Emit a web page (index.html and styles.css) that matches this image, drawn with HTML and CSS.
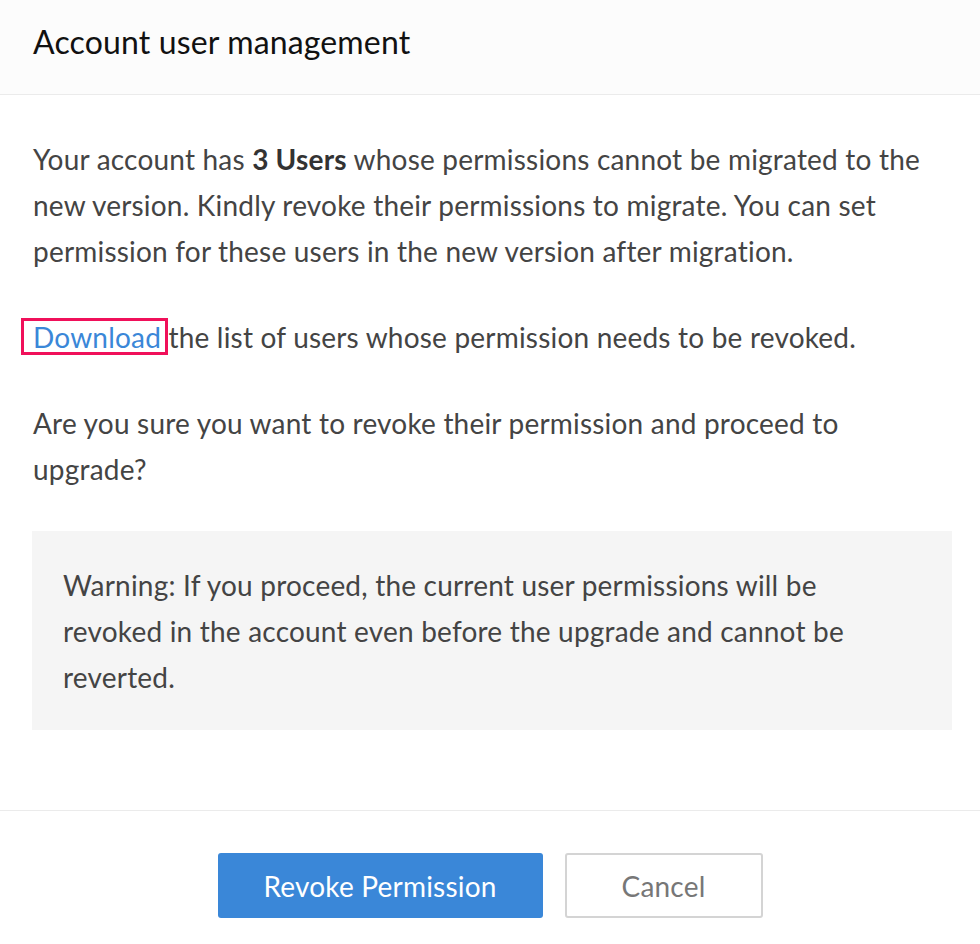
FILE: index.html
```html
<!DOCTYPE html>
<html lang="en">
<head>
    <meta charset="UTF-8">
    <meta name="viewport" content="width=device-width, initial-scale=1.0">
    <title>Account user management</title>
    <link rel="stylesheet" href="styles.css">
</head>
<body>
    <div class="dialog">
        <div class="dialog-header">
            <h2>Account user management</h2>
        </div>

        <div class="dialog-body">
            <p>Your account has <b>3 Users</b> whose permissions cannot be migrated to the new version. Kindly revoke their permissions to migrate. You can set permission for these users in the new version after migration.</p>
            <p><a href="#" class="download-link">Download</a> the list of users whose permission needs to be revoked.</p>
            <p>Are you sure you want to revoke their permission and proceed to upgrade?</p>

            <div class="warning-box">
                Warning: If you proceed, the current user permissions will be revoked in the account even before the upgrade and cannot be reverted.
            </div>
        </div>

        <div class="dialog-footer">
            <button class="btn btn-primary">Revoke Permission</button>
            <button class="btn btn-cancel">Cancel</button>
        </div>
    </div>
</body>
</html>
```

FILE: styles.css
```css
body {
    margin: 0;
    font-family: Lato, "Open Sans", sans-serif;
    background-color: #fff;
    color: #444;
}
.dialog {
    width: 980px;
}
.dialog-header {
    height: 95px;
    background-color: #fcfcfc;
    border-bottom: 1px solid #ebebeb;
    display: flex;
    align-items: center;
    padding: 0 33px;
    box-sizing: border-box;
}
.dialog-header h2 {
    margin: 0;
    font-size: 32px;
    font-weight: 400;
    letter-spacing: 0.15px;
    color: #111;
    padding-bottom: 11px;
}
.dialog-body {
    padding: 41px 28px 80px 33px;
    border-bottom: 1px solid #ebebeb;
}
.dialog-body p {
    margin: 0 0 40px 0;
    font-size: 28px;
    line-height: 46px;
    letter-spacing: 0.2px;
}
.dialog-body b {
    font-weight: 700;
    color: #333;
}
.download-link {
    position: relative;
    color: #3a87d8;
    text-decoration: none;
}
.download-link::after {
    content: "";
    position: absolute;
    left: -12px;
    right: -7px;
    top: -2px;
    bottom: -1px;
    border: 3px solid #f0105a;
}
.warning-box {
    margin-left: -1px;
    margin-top: -1px;
    background-color: #f5f5f5;
    padding: 31px 70px 30px 31px;
    font-size: 28px;
    line-height: 46px;
    letter-spacing: 0.2px;
}
.dialog-footer {
    display: flex;
    justify-content: center;
    gap: 22px;
    padding: 42px 0 27px 0;
}
.btn {
    height: 65px;
    font-family: Lato, "Open Sans", sans-serif;
    font-size: 28px;
    letter-spacing: 0.2px;
    border-radius: 3px;
    cursor: pointer;
}
.btn-primary {
    width: 325px;
    background-color: #3a87d8;
    color: #fff;
    border: none;
}
.btn-cancel {
    width: 198px;
    background-color: #fff;
    color: #777;
    border: 2px solid #d4d4d4;
}
```
